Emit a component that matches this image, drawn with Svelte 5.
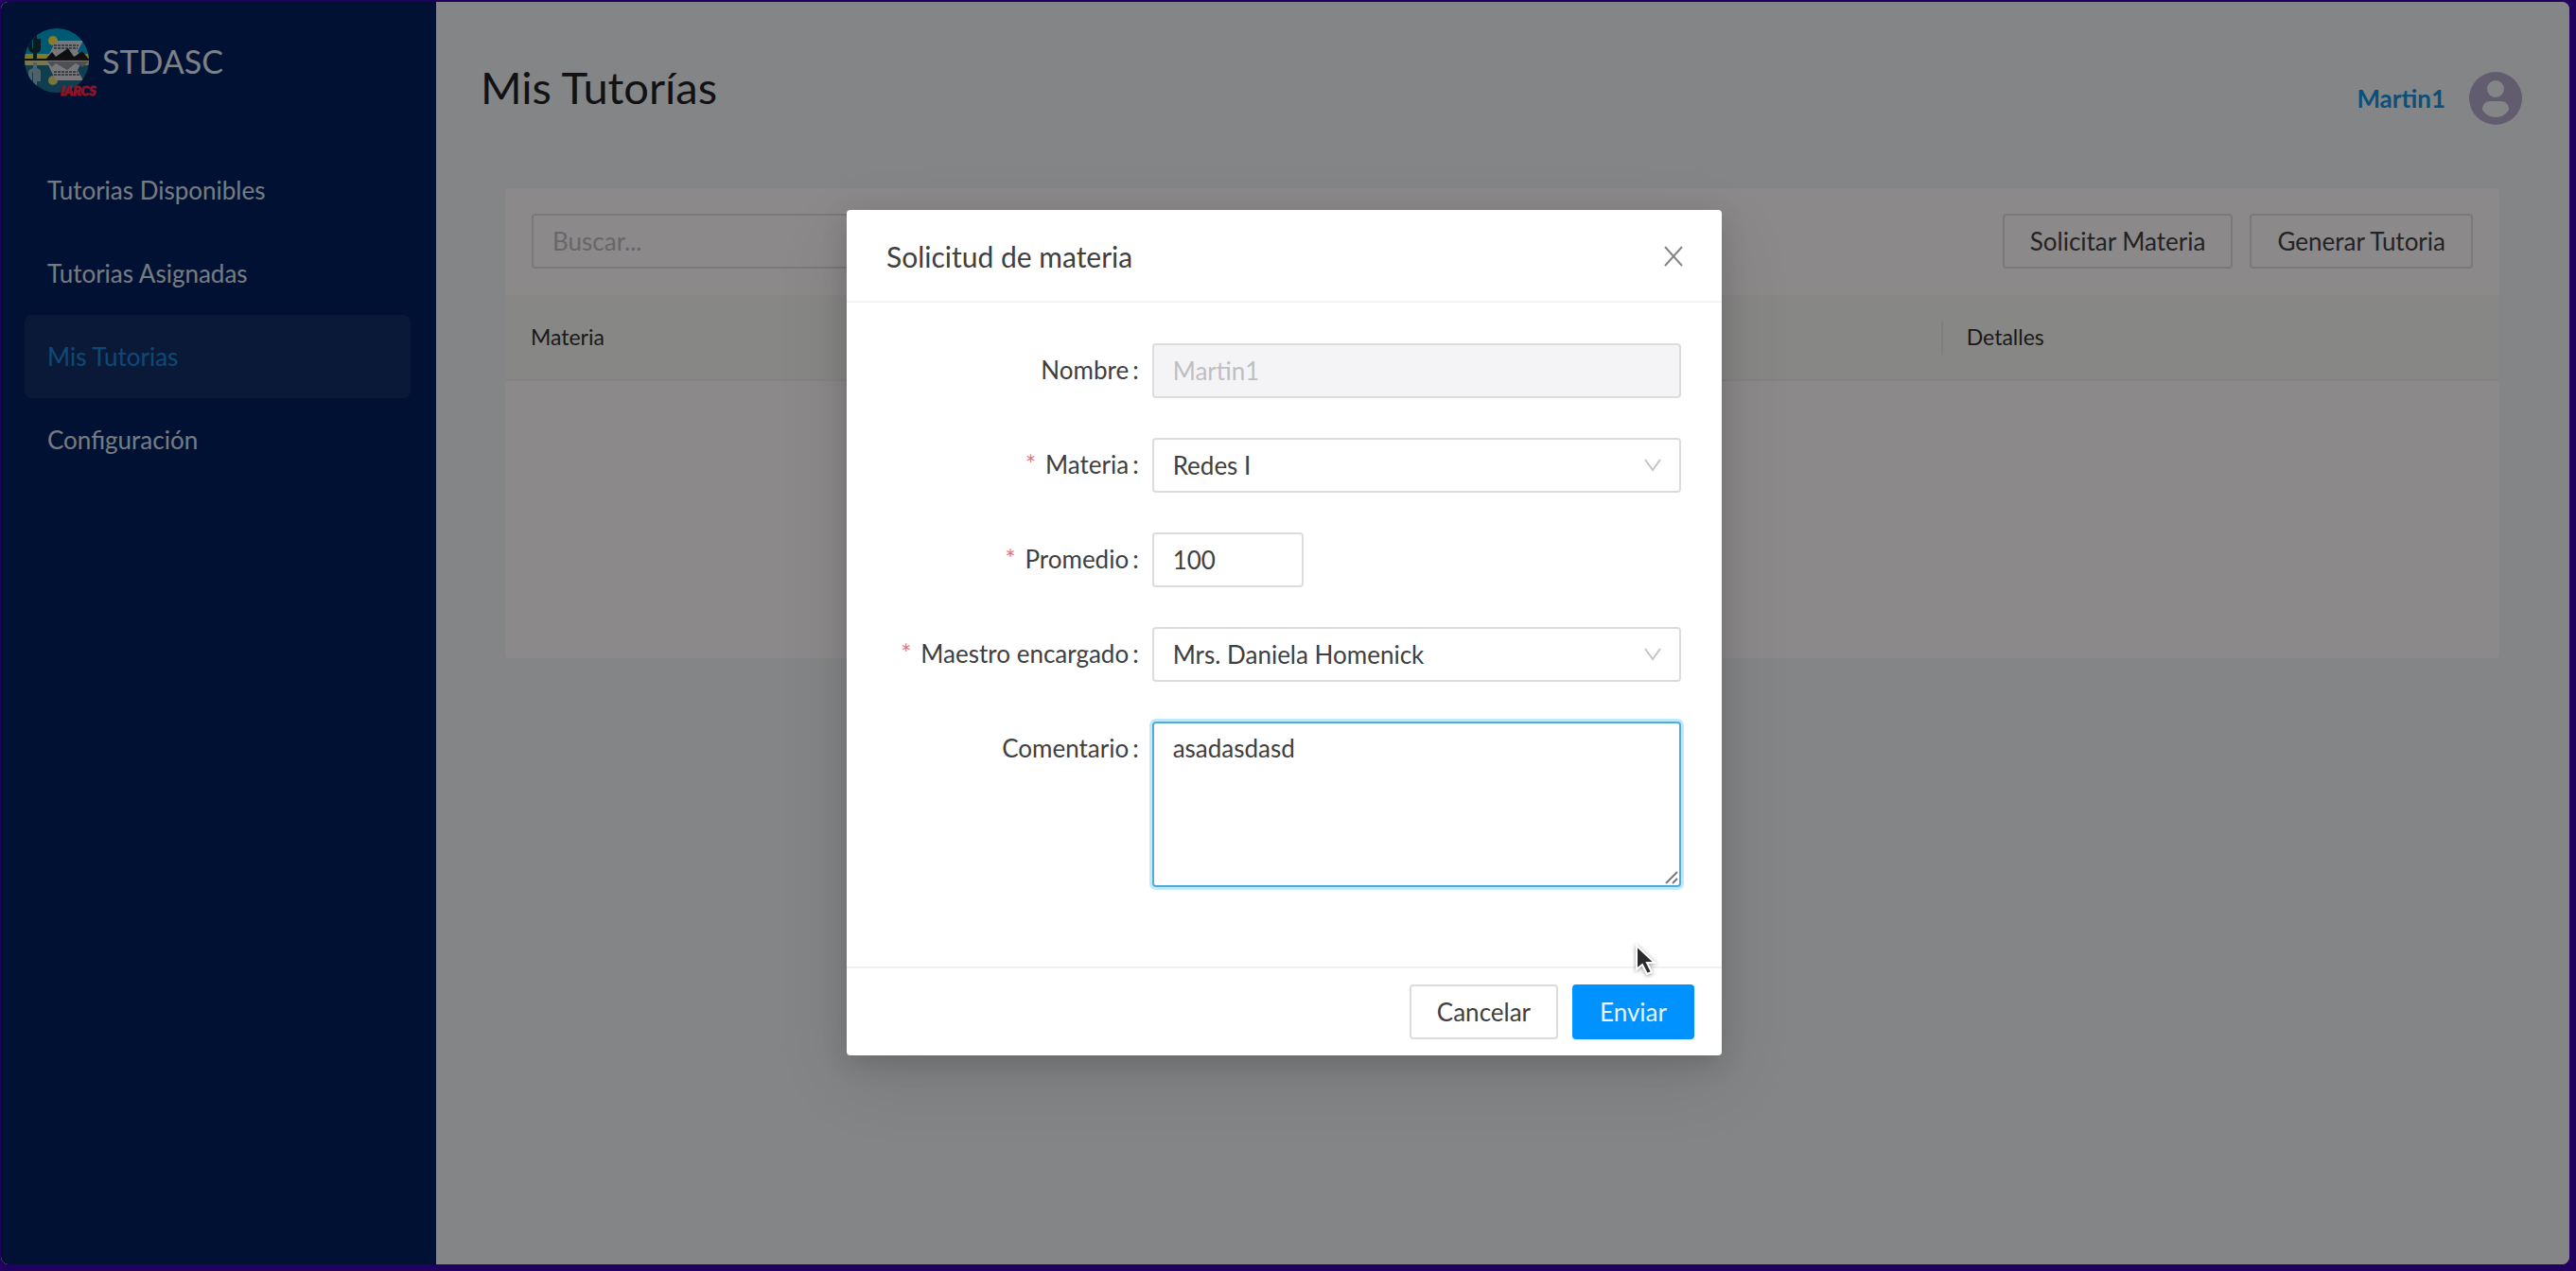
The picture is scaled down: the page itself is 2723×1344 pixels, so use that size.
<script>
  const links = ['Tutorias Disponibles', 'Tutorias Asignadas', 'Mis Tutorias', 'Configuración'];
  const current = 'Mis Tutorias';
  let search = $state('');
  let name = $state('Martin1');
  let subject = $state('Redes I');
  let average = $state('100');
  let teacher = $state('Mrs. Daniela Homenick');
  let comment = $state('asadasdasd');
</script>

{#snippet chevron()}
  <svg class="chevron" viewBox="0 0 18 14" aria-hidden="true"><path d="M1 1l8 11 8-11" /></svg>
{/snippet}

<div class="frame">
  <div class="window">
    <aside class="sidebar">
      <div class="brand">
        <svg class="logo" viewBox="0 0 82 76" aria-hidden="true">
          <defs><clipPath id="disc"><circle cx="34" cy="34" r="34" /></clipPath></defs>
          <g clip-path="url(#disc)">
            <path fill="#00a3d0" d="M0 0h68v34H0z" />
            <path fill="#1a7191" d="M0 34h68v34H0z" />
            <path fill="#f0df35" d="M0 27h68v7H0z" />
            <path fill="#d9d99a" d="M0 34h68v5H0z" />
            <circle cx="30" cy="13" r="5" fill="#f5e544" />
            <circle cx="30" cy="55" r="5" fill="#dcd66a" />
            <path fill="#d8dbe2" d="M33 13h29l-6 11 5 10-5 10 6 11H33l-6-12-4-9 4-9z" />
            <path stroke="#70757f" stroke-width="2" stroke-dasharray="3 1" d="M31 18h26M31 21h25M31 46h25M31 49h27" />
            <path fill="#1c1c1f" d="M22 33l7-8 4 5 13-9 6 9 2-1 7-5 7 9z" />
            <path fill="#8d9098" d="M24 35h44l-7 6-7-4-9 7-12-7-4 4z" />
            <path stroke="#222" stroke-width="2" d="M0 33h68" />
            <path fill="none" stroke="#143038" stroke-width="4" d="M11 5v28M6 10v10q0 4 5 4t4-4v-9" />
            <path fill="none" stroke="#8fb4bf" stroke-width="4" d="M11 36v26M6 57V47q0-3 5-3t4 3v9" />
          </g>
          <text x="38" y="71" class="mark">IARCS</text>
        </svg>
        <span class="brand-name">STDASC</span>
      </div>
      <nav>
        {#each links as link}
          <a href="#{link}" class:active={link === current}>{link}</a>
        {/each}
      </nav>
    </aside>

    <main>
      <header class="top">
        <h1>Mis Tutorías</h1>
        <a class="user" href="#perfil">
          Martin1
          <svg class="avatar" viewBox="0 0 56 56" aria-hidden="true">
            <circle cx="28" cy="28" r="28" fill="#b3a9c8" />
            <circle cx="28" cy="18" r="9" fill="#f0f2f5" />
            <path fill="#f0f2f5" d="M22 31h12c5 0 8 4 8 9-3 5-8 8-14 8s-11-3-14-8c0-5 3-9 8-9z" />
          </svg>
        </a>
      </header>

      <section class="card">
        <div class="toolbar">
          <input class="field search" type="text" placeholder="Buscar..." aria-label="Buscar" bind:value={search} />
          <div class="actions">
            <button type="button" class="btn">Solicitar Materia</button>
            <button type="button" class="btn">Generar Tutoria</button>
          </div>
        </div>
        <table>
          <thead><tr><th class="wide" scope="col">Materia</th><th scope="col">Detalles</th></tr></thead>
          <tbody></tbody>
        </table>
      </section>
    </main>

    <div class="overlay">
      <div class="modal" role="dialog" aria-modal="true" aria-labelledby="modal-title">
        <header class="modal-head">
          <h2 id="modal-title">Solicitud de materia</h2>
          <button type="button" class="close" aria-label="Cerrar">
            <svg viewBox="0 0 20 22" aria-hidden="true"><path d="M1 1l18 20M19 1L1 21" /></svg>
          </button>
        </header>
        <form id="request">
          <label for="name">Nombre<span class="colon">:</span></label>
          <input id="name" class="field" type="text" disabled bind:value={name} />

          <label for="subject"><span class="req">*</span>Materia<span class="colon">:</span></label>
          <div class="control">
            <select id="subject" class="field" bind:value={subject}><option>Redes I</option></select>
            {@render chevron()}
          </div>

          <label for="average"><span class="req">*</span>Promedio<span class="colon">:</span></label>
          <input id="average" class="field short" type="text" inputmode="numeric" bind:value={average} />

          <label for="teacher"><span class="req">*</span>Maestro encargado<span class="colon">:</span></label>
          <div class="control">
            <select id="teacher" class="field" bind:value={teacher}><option>Mrs. Daniela Homenick</option></select>
            {@render chevron()}
          </div>

          <label for="comment">Comentario<span class="colon">:</span></label>
          <div class="control">
            <textarea id="comment" class="field" spellcheck="false" bind:value={comment}></textarea>
            <svg class="grip" viewBox="0 0 14 14" aria-hidden="true"><path d="M1 13L13 1M8 13l5-5" /></svg>
          </div>
        </form>
        <footer class="modal-foot">
          <button type="button" class="btn">Cancelar</button>
          <button type="submit" form="request" class="btn primary">Enviar</button>
        </footer>
        <svg class="cursor" viewBox="0 0 24 36" aria-hidden="true">
          <path d="M3 2v25l6-5 5 10 5-2-5-10h8z" />
        </svg>
      </div>
    </div>
  </div>
</div>

<style>
  :global(body) { margin: 0; background: #22005f; }
  * { box-sizing: border-box; }
  .frame {
    min-height: 100vh;
    padding: 2px 7px 7px 1px;
    display: flex;
    background: #22005f;
    font-family: Lato, "Open Sans", sans-serif;
    font-size: 26px;
    line-height: 40px;
    color: #404040;
  }
  .window {
    position: relative;
    flex: 1;
    display: flex;
    border-radius: 8px;
    overflow: hidden;
    background: #f0f2f5;
  }
  .sidebar { flex: 0 0 460px; padding: 28px 27px 28px 25px; background: #00205f; }
  .brand { display: flex; align-items: flex-start; }
  .logo { width: 82px; height: 76px; overflow: visible; }
  .mark { font: italic 900 14px Lato, sans-serif; fill: #ff2644; stroke: #ff2644; stroke-width: 1px; }
  .brand-name { font-size: 34px; line-height: 70px; color: #e4e9f2; }
  nav { display: flex; flex-direction: column; margin-top: 51px; }
  nav a {
    padding: 24px;
    line-height: 40px;
    border-radius: 8px;
    color: #d9e0ea;
    text-decoration: none;
  }
  nav a.active { background: #142f69; color: #1b86d6; }

  main { flex: 1; min-width: 0; padding: 55px 47px; }
  .top { display: flex; justify-content: space-between; }
  h1 { margin: 0; font-size: 47px; line-height: 70px; font-weight: 400; color: #222225; }
  .user {
    display: flex;
    align-items: center;
    gap: 25px;
    height: 94px;
    margin-right: 3px;
    font-weight: 700;
    color: #1890e0;
    text-decoration: none;
  }
  .avatar { width: 56px; height: 56px; }
  .card {
    margin: 48px 27px 0 26px;
    min-height: 497px;
    border-radius: 4px;
    background: #fffafd;
  }
  .toolbar { display: flex; justify-content: space-between; padding: 27px 28px 28px; }
  .actions { display: flex; gap: 18px; }
  table { width: 100%; border-collapse: collapse; table-layout: fixed; }
  th {
    height: 90px;
    padding: 0 27px 2px;
    text-align: left;
    font-size: 23px;
    font-weight: 400;
    color: #303030;
    background: #f6f6f5 linear-gradient(#e8e8e8, #e8e8e8) 0 50% / 2px 36px no-repeat;
    border-bottom: 2px solid #efefef;
  }
  th.wide { width: 72%; background-image: none; }

  .field {
    width: 100%;
    height: 58px;
    padding: 0 20px;
    border: 2px solid #dcdcdc;
    border-radius: 4px;
    background: #fff;
    color: #404040;
    font: inherit;
    line-height: 40px;
    appearance: none;
    outline: none;
  }
  .field:disabled { background: #f4f4f6; color: #bfbfbf; opacity: 1; }
  .field::placeholder { color: #bcbcbe; }
  .field.search { width: 460px; background: none; }
  .field.short { width: 160px; }
  .btn {
    height: 58px;
    padding: 0 27px;
    border: 2px solid #dcdcdc;
    border-radius: 4px;
    background: none;
    color: #404040;
    font: inherit;
  }
  .primary { background: #0092ff; border-color: #0092ff; color: #e6f4ff; }

  .overlay {
    position: absolute;
    inset: 0;
    display: flex;
    justify-content: center;
    align-items: flex-start;
    padding: 220px 2px 0 0;
    background: rgba(0, 0, 0, 0.45);
  }
  .modal {
    position: relative;
    width: 925px;
    border-radius: 4px;
    background: #fff;
    box-shadow: 0 8px 28px rgba(0, 0, 0, 0.15), 0 24px 80px rgba(0, 0, 0, 0.1);
  }
  .modal-head {
    display: flex;
    justify-content: space-between;
    align-items: center;
    padding: 29px 41px 27px 42px;
    border-bottom: 2px solid #f5f3f8;
  }
  h2 { margin: 0; font-size: 30px; line-height: 40px; font-weight: 400; }
  .close { padding: 0; border: 0; background: none; display: flex; }
  .close svg { width: 20px; height: 22px; stroke: #858587; stroke-width: 2; }
  form {
    display: grid;
    grid-template-columns: 1fr 2fr;
    gap: 42px 0;
    padding: 43px 43px 84px;
  }
  label { line-height: 56px; text-align: right; white-space: nowrap; }
  .req { margin-right: 10px; color: #f0707a; }
  .colon { margin: 0 14px 0 4px; }
  .control { position: relative; display: flex; }
  textarea.field {
    height: 175px;
    padding: 6px 20px;
    resize: none;
    border-color: #52acd8;
    box-shadow: 0 0 0 3px #bdeafc;
  }
  .chevron {
    position: absolute;
    right: 21px;
    top: 22px;
    width: 18px;
    height: 14px;
    fill: none;
    stroke: #c4c4c4;
    stroke-width: 2;
    pointer-events: none;
  }
  .grip { position: absolute; right: 3px; bottom: 3px; width: 14px; height: 14px; stroke: #77777b; stroke-width: 2; }
  .modal-foot {
    display: flex;
    justify-content: flex-end;
    gap: 15px;
    padding: 17px 29px;
    border-top: 2px solid #f0f0f0;
  }
  .cursor {
    position: absolute;
    right: 69px;
    bottom: 82px;
    width: 24px;
    height: 36px;
    fill: #2b2b2d;
    stroke: #fff;
    stroke-width: 2;
    filter: drop-shadow(0 1px 2px rgba(0, 0, 0, 0.4));
  }
</style>
